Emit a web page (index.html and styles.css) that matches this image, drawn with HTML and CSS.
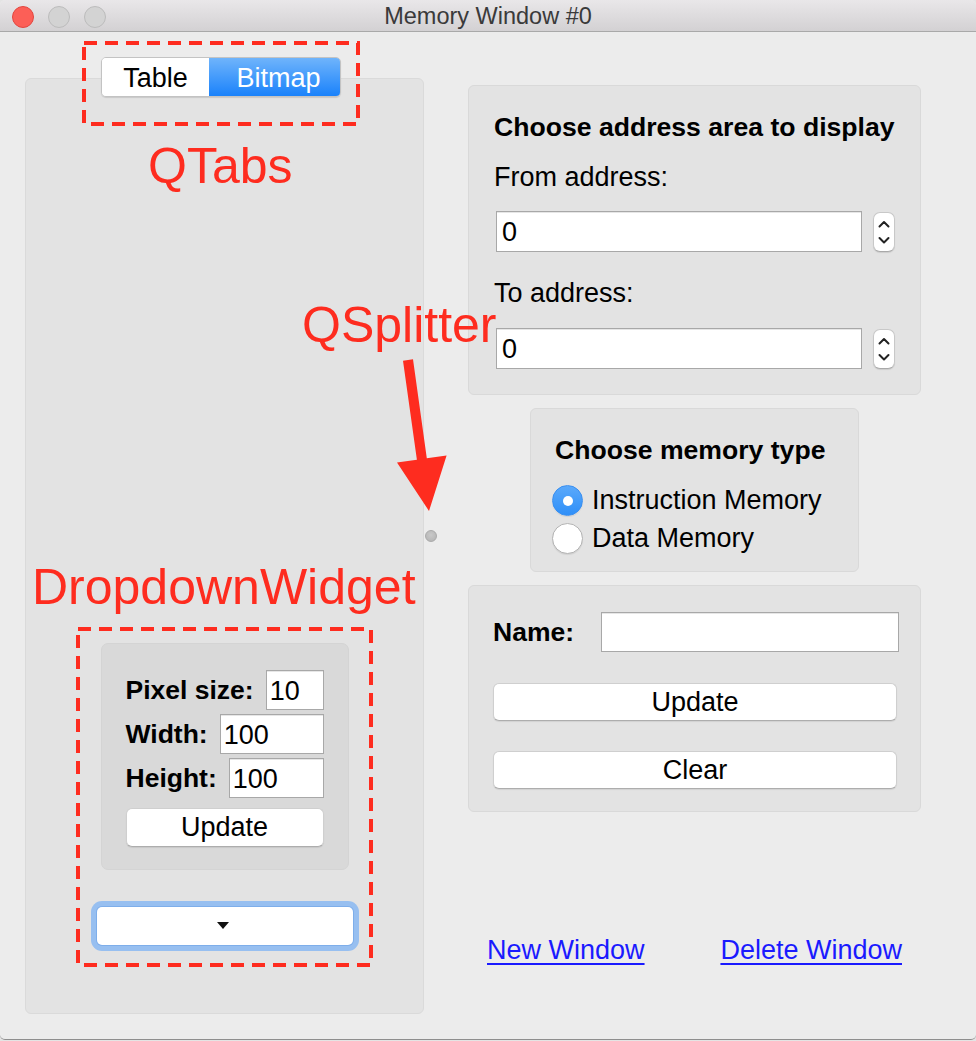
FILE: index.html
```html
<!DOCTYPE html>
<html>
<head>
<meta charset="utf-8">
<title>Memory Window #0</title>
<link rel="stylesheet" href="styles.css">
</head>
<body>
<div class="window">
  <div class="titlebar">
    <div class="lights">
      <span class="light red"></span>
      <span class="light"></span>
      <span class="light"></span>
    </div>
    <div class="title">Memory Window #0</div>
    <div class="spacer"></div>
  </div>
  <div class="content">
    <div class="left">
      <div class="tabs">
        <div class="tab">Table</div>
        <div class="tab active">Bitmap</div>
      </div>
      <div class="panel">
        <div class="dd-box">
          <div class="dd-row"><span class="lbl">Pixel size:</span><div class="field">10</div></div>
          <div class="dd-row"><span class="lbl">Width:</span><div class="field">100</div></div>
          <div class="dd-row"><span class="lbl">Height:</span><div class="field">100</div></div>
          <div class="btn dd-update">Update</div>
        </div>
        <div class="dd-btn"><span class="caret"></span></div>
      </div>
    </div>
    <div class="splitter"><span class="handle"></span></div>
    <div class="right">
      <div class="group g-addr">
        <div class="gtitle">Choose address area to display</div>
        <div class="label first">From address:</div>
        <div class="spin-row">
          <div class="field wide">0</div>
          <div class="spin">
            <svg width="22" height="40" viewBox="0 0 22 40"><polyline points="6.5,14.5 11,10 15.5,14.5" fill="none" stroke="#222" stroke-width="2" stroke-linecap="round" stroke-linejoin="round"/><polyline points="6.5,26 11,30.5 15.5,26" fill="none" stroke="#222" stroke-width="2" stroke-linecap="round" stroke-linejoin="round"/></svg>
          </div>
        </div>
        <div class="label second">To address:</div>
        <div class="spin-row">
          <div class="field wide">0</div>
          <div class="spin">
            <svg width="22" height="40" viewBox="0 0 22 40"><polyline points="6.5,14.5 11,10 15.5,14.5" fill="none" stroke="#222" stroke-width="2" stroke-linecap="round" stroke-linejoin="round"/><polyline points="6.5,26 11,30.5 15.5,26" fill="none" stroke="#222" stroke-width="2" stroke-linecap="round" stroke-linejoin="round"/></svg>
          </div>
        </div>
      </div>
      <div class="group g-mem">
        <div class="gtitle">Choose memory type</div>
        <div class="radios">
          <div class="radio-row"><span class="radio checked"></span><span>Instruction Memory</span></div>
          <div class="radio-row"><span class="radio"></span><span>Data Memory</span></div>
        </div>
      </div>
      <div class="group g-name">
        <div class="name-row"><span class="lbl">Name:</span><div class="field name-field"></div></div>
        <div class="btn update">Update</div>
        <div class="btn clear">Clear</div>
      </div>
      <div class="links">
        <a href="#" class="link">New Window</a>
        <a href="#" class="link">Delete Window</a>
      </div>
    </div>
  </div>

  <svg class="annot" width="976" height="1041" viewBox="0 0 976 1041">
    <rect x="84" y="43" width="274" height="81" fill="none" stroke="#fe2c1f" stroke-width="4" stroke-dasharray="13 8"/>
    <rect x="78" y="629" width="293" height="336" fill="none" stroke="#fe2c1f" stroke-width="4" stroke-dasharray="13 8"/>
    <polygon points="403,360.7 413,359.3 426.8,458.3 446.6,455.6 429,511 397,462.5 416.9,459.7" fill="#fe2c1f"/>
  </svg>
  <div class="note note-tabs">QTabs</div>
  <div class="note note-split">QSplitter</div>
  <div class="note note-dd">DropdownWidget</div>
</div>
</body>
</html>
```
FILE: styles.css
```css
* { box-sizing: border-box; }

html, body {
  margin: 0;
  padding: 0;
}

body {
  width: 976px;
  height: 1041px;
  background: #e4e4e4;
  font-family: "Liberation Sans", Arial, sans-serif;
  font-size: 27px;
  color: #000;
  overflow: hidden;
}

.window {
  position: relative;
  width: 976px;
  height: 1040px;
  background: #ececec;
  border-radius: 5px;
  border-bottom: 1px solid #8e8e8e;
  overflow: hidden;
  display: flex;
  flex-direction: column;
}

/* ---------- title bar ---------- */
.titlebar {
  height: 32px;
  flex: none;
  display: grid;
  grid-template-columns: 1fr auto 1fr;
  align-items: center;
  background: linear-gradient(#e9e7e9, #d3d1d3);
  border-bottom: 1px solid #a9a9a9;
  border-radius: 5px 5px 0 0;
}

.lights {
  display: flex;
  gap: 14px;
  padding-left: 12px;
  padding-top: 3px;
}

.light {
  width: 22px;
  height: 22px;
  border-radius: 50%;
  background: #d3d3d3;
  border: 1px solid #bcbcbc;
}

.light.red {
  background: #fc5f57;
  border-color: #e2463f;
}

.title {
  font-size: 23.5px;
  color: #3a3a3a;
  padding-top: 2px;
}

/* ---------- content ---------- */
.content {
  flex: 1;
  display: flex;
  min-height: 0;
}

.left {
  width: 399px;
  margin-left: 25px;
  padding-top: 25px;
  padding-bottom: 25px;
  display: flex;
  flex-direction: column;
}

.tabs {
  position: relative;
  z-index: 1;
  align-self: flex-start;
  margin-left: 76px;
  width: 240px;
  height: 40px;
  display: flex;
  border: 1px solid #c3c3c3;
  border-radius: 5px;
  overflow: hidden;
  box-shadow: 0 1px 1px rgba(0, 0, 0, 0.12);
}

.tab {
  display: flex;
  align-items: center;
  justify-content: center;
  line-height: 1;
  padding-top: 2px;
}

.tab:first-child {
  width: 107px;
  background: #fff;
}

.tab.active {
  flex: 1;
  padding-left: 8px;
  background: linear-gradient(#6fb4fb, #1a82fb);
  color: #fff;
}

.panel {
  flex: 1;
  margin-top: -19px;
  background: #e3e3e3;
  border: 1px solid #dadada;
  border-radius: 6px;
  display: flex;
  flex-direction: column;
  align-items: center;
  justify-content: flex-end;
  padding-bottom: 68px;
}

.dd-box {
  width: 248px;
  background: #d9d9d9;
  border: 1px solid #d4d4d4;
  border-radius: 7px;
  padding: 26px 24px 22px 24px;
  display: flex;
  flex-direction: column;
  gap: 4px;
}

.dd-row {
  display: flex;
  align-items: center;
  gap: 12px;
}

.lbl {
  font-weight: bold;
  font-size: 26.5px;
  line-height: 30px;
  white-space: nowrap;
}

.field {
  height: 40px;
  background: #fff;
  border: 1px solid #a8a8a8;
  box-shadow: inset 0 1px 0 #e6e6e6;
  padding-left: 3px;
  padding-top: 2px;
  display: flex;
  align-items: center;
  line-height: 1;
}

.dd-row .field {
  flex: 1;
}

.btn {
  height: 39px;
  background: #fff;
  border-radius: 6px;
  border: 1px solid #cfcfcf;
  border-bottom-color: #adadad;
  box-shadow: 0 1px 1px rgba(0, 0, 0, 0.08);
  display: flex;
  align-items: center;
  justify-content: center;
  line-height: 1;
}

.dd-update {
  margin-top: 6px;
}

.dd-btn {
  margin-top: 37px;
  width: 256px;
  height: 38px;
  background: #fff;
  border-radius: 5px;
  box-shadow: 0 0 0 1px #7eaeea, 0 0 0 6px #97bff0;
  display: flex;
  align-items: center;
  justify-content: center;
}

.caret {
  width: 0;
  height: 0;
  border-left: 6px solid transparent;
  border-right: 6px solid transparent;
  border-top: 7px solid #111;
  margin-left: -3px;
  margin-top: -2px;
}

/* ---------- splitter ---------- */
.splitter {
  width: 44px;
  display: flex;
  align-items: center;
  padding-left: 1px;
}

.handle {
  width: 12px;
  height: 12px;
  border-radius: 50%;
  background: radial-gradient(circle at 50% 40%, #c9c9c9, #b2b2b2);
  border: 1px solid #aaaaaa;
}

/* ---------- right column ---------- */
.right {
  width: 453px;
  padding-top: 53px;
  display: flex;
  flex-direction: column;
}

.group {
  background: #e3e3e3;
  border: 1px solid #d9d9d9;
  border-radius: 6px;
}

.gtitle {
  font-weight: bold;
  font-size: 26.6px;
  line-height: 30px;
  white-space: nowrap;
}

.label {
  line-height: 30px;
}

.g-addr {
  padding: 26px 25px 25px 25px;
}

.g-addr .label.first {
  margin-top: 20px;
}

.g-addr .label.second {
  margin-top: 26px;
}

.spin-row {
  margin-top: 19px;
  display: flex;
  align-items: center;
  gap: 11px;
}

.g-addr .label.second + .spin-row {
  margin-top: 20px;
}

.field.wide {
  width: 367px;
  height: 41px;
  margin-left: 2px;
  padding-left: 5px;
}

.spin {
  width: 22px;
  height: 40px;
  background: #fff;
  border-radius: 7px;
  border: 1px solid #c8c8c8;
  border-bottom-color: #a9a9a9;
  box-shadow: 0 1px 1px rgba(0, 0, 0, 0.1);
  display: flex;
  overflow: hidden;
}

.spin svg {
  margin: -1px;
  flex: none;
}

.g-mem {
  width: 329px;
  align-self: center;
  margin-top: 13px;
  padding: 26px 10px 14px 24px;
}

.radios {
  margin-top: 17px;
  margin-left: -3px;
}

.radio-row {
  height: 37.5px;
  display: flex;
  align-items: center;
  gap: 9px;
  white-space: nowrap;
}

.radio {
  width: 31px;
  height: 31px;
  flex: none;
  border-radius: 50%;
  background: #fff;
  border: 1px solid #b3b3b3;
  box-shadow: 0 1px 1px rgba(0, 0, 0, 0.08);
  display: flex;
  align-items: center;
  justify-content: center;
}

.radio.checked {
  background: linear-gradient(#5aa9fb, #2f8ff8);
  border-color: #3a8ff0;
}

.radio.checked::after {
  content: "";
  width: 10px;
  height: 10px;
  border-radius: 50%;
  background: #fff;
}

.g-name {
  margin-top: 13px;
  padding: 26px 23px 22px 24px;
}

.name-row {
  display: flex;
  align-items: center;
  height: 40px;
}

.name-field {
  width: 298px;
  height: 40px;
  margin-left: auto;
  margin-right: -2px;
}

.btn.update {
  margin-top: 31px;
  height: 38px;
}

.btn.clear {
  margin-top: 30px;
  height: 38px;
}

.links {
  margin-top: 123px;
  padding: 0 19px;
  display: flex;
  justify-content: space-between;
  line-height: 30px;
}

.link {
  color: #1a1aff;
  text-decoration: underline;
  text-underline-offset: 4px;
  text-decoration-thickness: 1.5px;
}

/* ---------- annotations ---------- */
.annot {
  position: absolute;
  left: 0;
  top: 0;
  pointer-events: none;
}

.note {
  position: absolute;
  color: #fe2c1f;
  font-size: 50px;
  line-height: 50px;
  white-space: nowrap;
  pointer-events: none;
}

.note-tabs {
  left: 148px;
  top: 141px;
}

.note-split {
  left: 302px;
  top: 300px;
}

.note-dd {
  left: 32px;
  top: 562px;
}
```
